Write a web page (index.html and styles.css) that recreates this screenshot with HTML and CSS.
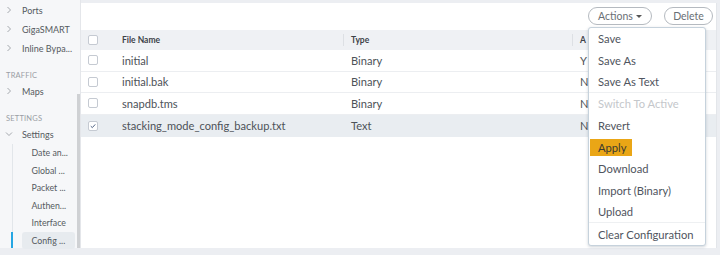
FILE: index.html
```html
<!DOCTYPE html>
<html>
<head>
<meta charset="utf-8">
<link rel="stylesheet" href="styles.css">
</head>
<body>
<div class="app">
  <aside class="sidebar">
    <nav class="nav">
      <div class="nav-item"><svg class="chev" viewBox="0 0 6 8"><path d="M1.5 1 L4.5 4 L1.5 7"/></svg><span>Ports</span></div>
      <div class="nav-item"><svg class="chev" viewBox="0 0 6 8"><path d="M1.5 1 L4.5 4 L1.5 7"/></svg><span>GigaSMART</span></div>
      <div class="nav-item"><svg class="chev" viewBox="0 0 6 8"><path d="M1.5 1 L4.5 4 L1.5 7"/></svg><span>Inline Bypa...</span></div>
      <div class="section">TRAFFIC</div>
      <div class="nav-item short"><svg class="chev" viewBox="0 0 6 8"><path d="M1.5 1 L4.5 4 L1.5 7"/></svg><span>Maps</span></div>
      <div class="section">SETTINGS</div>
      <div class="nav-item short"><svg class="chev down" viewBox="0 0 8 6"><path d="M1 1.5 L4 4.5 L7 1.5"/></svg><span>Settings</span></div>
      <div class="subtree">
        <div class="sub">Date an...</div>
        <div class="sub">Global ...</div>
        <div class="sub">Packet ...</div>
        <div class="sub">Authen...</div>
        <div class="sub">Interface</div>
        <div class="sub active">Config ...</div>
      </div>
    </nav>
    <div class="scroll"><div class="thumb"></div></div>
  </aside>
  <main class="main">
    <div class="toolbar">
      <div class="dropdown">
        <button class="pill actions">Actions <span class="caret"></span></button>
        <ul class="menu">
          <li>Save</li>
          <li>Save As</li>
          <li class="sep">Save As Text</li>
          <li class="disabled">Switch To Active</li>
          <li>Revert</li>
          <li><span class="hl">Apply</span></li>
          <li>Download</li>
          <li>Import (Binary)</li>
          <li class="sep">Upload</li>
          <li class="last">Clear Configuration</li>
        </ul>
      </div>
      <button class="pill delete">Delete</button>
    </div>
    <div class="table">
      <div class="row head">
        <div class="cell cb"><span class="box"></span></div>
        <div class="cell">File Name</div>
        <div class="cell col">Type</div>
        <div class="cell col">A</div>
      </div>
      <div class="row">
        <div class="cell cb"><span class="box"></span></div>
        <div class="cell">initial</div>
        <div class="cell col">Binary</div>
        <div class="cell col">Y</div>
      </div>
      <div class="row">
        <div class="cell cb"><span class="box"></span></div>
        <div class="cell">initial.bak</div>
        <div class="cell col">Binary</div>
        <div class="cell col">N</div>
      </div>
      <div class="row">
        <div class="cell cb"><span class="box"></span></div>
        <div class="cell">snapdb.tms</div>
        <div class="cell col">Binary</div>
        <div class="cell col">N</div>
      </div>
      <div class="row selected">
        <div class="cell cb"><span class="box checked"><svg viewBox="0 0 10 10"><path d="M2.2 5.2 L4.2 7 L7.8 3"/></svg></span></div>
        <div class="cell">stacking_mode_config_backup.txt</div>
        <div class="cell col">Text</div>
        <div class="cell col">N</div>
      </div>
    </div>
  </main>
</div>
</body>
</html>
```
FILE: styles.css
```css
* { box-sizing: border-box; }
html, body { margin: 0; padding: 0; }
body {
  width: 720px;
  height: 255px;
  background: #eceef2;
  font-family: Lato, "Open Sans", sans-serif;
  color: #4a4f55;
  overflow: hidden;
}
.app {
  display: flex;
  height: 248px;
}
.sidebar {
  width: 81px;
  background: #f6f7f9;
  display: flex;
  border-right: 1px solid #e4e6ea;
}
.nav {
  flex: 1;
  padding-top: 0.5px;
}
.nav-item {
  height: 19px;
  display: flex;
  align-items: center;
  font-size: 9px;
  color: #555a60;
}
.nav-item.short { height: 18px; }
.chev {
  width: 6px;
  height: 8px;
  margin-left: 6px;
  margin-right: 10px;
  fill: none;
  stroke: #9a9ea4;
  stroke-width: 0.9;
}
.chev.down {
  width: 8px;
  height: 6px;
  margin-left: 5px;
  margin-right: 9px;
}
.section {
  height: 12px;
  margin-top: 12.5px;
  padding-left: 6px;
  font-size: 7.5px;
  line-height: 12px;
  color: #9a9ea5;
  letter-spacing: 0.2px;
}
.nav-item.short + .section { margin-top: 13px; }
.subtree {
  margin-top: 1px;
  margin-left: 11.5px;
  border-left: 1px solid #e2e6ea;
  padding-left: 9px;
  height: 104px;
}
.sub {
  height: 17.5px;
  line-height: 17.5px;
  font-size: 8.8px;
  color: #555a60;
  padding-left: 10px;
  width: 53px;
  border-radius: 3px;
  position: relative;
}
.sub.active {
  background: #e7ebef;
}
.sub.active::before {
  content: "";
  position: absolute;
  left: -10.5px;
  top: 0.5px;
  width: 2px;
  height: 16px;
  background: #25a6e3;
}
.scroll {
  width: 3px;
  display: flex;
  flex-direction: column;
  padding-top: 94px;
}
.thumb {
  flex: 1;
  background: #cfd1d4;
}
.main {
  flex: 1;
  margin-top: 3px;
  margin-right: 3px;
  background: #fff;
  display: flex;
  flex-direction: column;
  border-right: 1px solid #e3e6ea;
}
.toolbar {
  height: 27px;
  display: flex;
  justify-content: flex-end;
  align-items: flex-start;
  padding-top: 4px;
  padding-right: 3px;
  gap: 12px;
}
.dropdown { position: relative; }
.pill {
  height: 18px;
  border: 1px solid #b5bac0;
  border-radius: 10px;
  background: #fff;
  font-family: Lato, "Open Sans", sans-serif;
  font-size: 10.5px;
  color: #6a6f75;
  padding: 0;
  display: flex;
  align-items: center;
  justify-content: center;
}
.actions { width: 64px; }
.delete { width: 49px; }
.caret {
  display: inline-block;
  width: 0;
  height: 0;
  margin-left: 3px;
  border-left: 3px solid transparent;
  border-right: 3px solid transparent;
  border-top: 3.5px solid #555;
}
.menu {
  position: absolute;
  left: 0;
  top: 20px;
  width: 118px;
  height: 219px;
  margin: 0;
  padding: 0 0 0 0;
  list-style: none;
  background: #fff;
  border: 1px solid #c6d2dc;
  border-radius: 3px;
  box-shadow: 0 1px 3px rgba(60, 80, 100, 0.25);
  z-index: 5;
}
.menu li {
  height: 21.7px;
  display: flex;
  align-items: center;
  padding-left: 9px;
  font-size: 11.2px;
  color: #505560;
}
.menu li.sep { border-bottom: 1px solid #eef0f2; }
.menu li.last { height: 23px; padding-top: 0; }
.menu li.disabled { color: #c4c7cb; }
.hl {
  background: #eaa616;
  color: #3b3a30;
  margin-left: -8px;
  padding: 0 5px 0 8px;
  height: 17px;
  line-height: 17px;
}
.table {
  display: flex;
  flex-direction: column;
}
.row {
  display: grid;
  grid-template-columns: 41px 221px 229px 1fr;
  height: 21.5px;
  align-items: center;
  border-bottom: 1px solid #eceef1;
  font-size: 11.1px;
  color: #4d5258;
}
.row.head {
  height: 20px;
  background: #eff1f4;
  font-size: 8.5px;
  font-weight: 700;
  color: #3d4248;
  border-bottom: none;
}
.row.selected {
  background: #e9edf1;
  border-bottom: none;
  height: 22px;
}
.cell { white-space: nowrap; overflow: visible; }
.cell.col { padding-left: 8px; }
.row.head .cell.col { border-left: 1px solid #dde0e4; line-height: 12px; padding-left: 7px; }
.cb { display: flex; padding-left: 7px; }
.box {
  width: 10px;
  height: 10px;
  border: 1px solid #c5cad2;
  border-radius: 2px;
  background: #fff;
  display: flex;
}
.box svg {
  width: 8px;
  height: 8px;
  fill: none;
  stroke: #4a5e80;
  stroke-width: 1.2;
}
```
